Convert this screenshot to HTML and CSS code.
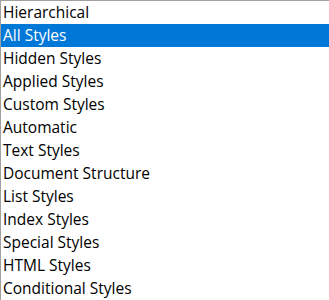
FILE: index.html
```html
<!DOCTYPE html>
<html>
<head>
<meta charset="utf-8">
<link rel="stylesheet" href="styles.css">
</head>
<body>
<ul class="list">
  <li class="item">Hierarchical</li>
  <li class="item selected">All Styles</li>
  <li class="item">Hidden Styles</li>
  <li class="item">Applied Styles</li>
  <li class="item">Custom Styles</li>
  <li class="item">Automatic</li>
  <li class="item">Text Styles</li>
  <li class="item">Document Structure</li>
  <li class="item">List Styles</li>
  <li class="item">Index Styles</li>
  <li class="item">Special Styles</li>
  <li class="item">HTML Styles</li>
  <li class="item">Conditional Styles</li>
</ul>
</body>
</html>
```
FILE: styles.css
```css
html, body {
  margin: 0;
  padding: 0;
  background: #ffffff;
}
.list {
  list-style: none;
  margin: 0;
  padding: 0;
  height: 300px;
  box-sizing: border-box;
  border-top: 1px solid #a0a0a0;
  border-left: 1px solid #a0a0a0;
  overflow: hidden;
  font-family: "Open Sans", "Noto Sans", sans-serif;
  font-size: 15.5px;
  color: #000000;
}
.item {
  height: 23px;
  line-height: 23px;
  padding-left: 2px;
  white-space: nowrap;
}
.selected {
  background: #0078d7;
  color: #ffffff;
}
```
